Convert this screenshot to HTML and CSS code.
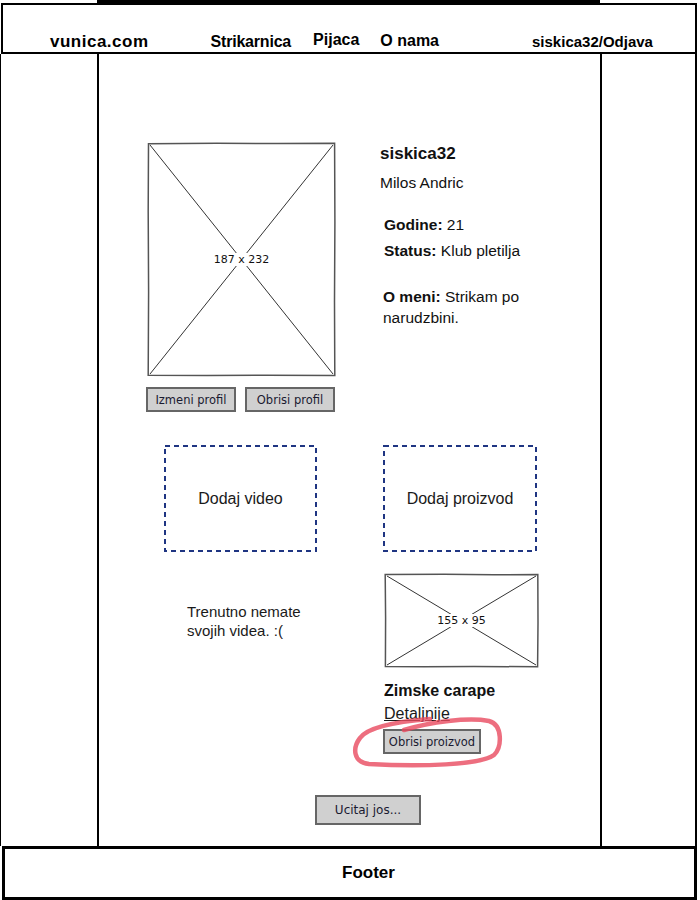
FILE: index.html
```html
<!DOCTYPE html>
<html lang="sr">
<head>
<meta charset="utf-8">
<title>vunica.com - profil</title>
<link rel="stylesheet" href="styles.css">
</head>
<body>
<div class="page">
  <div class="topline"></div>
  <header class="header">
    <span class="brand">vunica.com</span>
    <span class="nav-item nav-strik">Strikarnica</span>
    <span class="nav-item nav-pijaca">Pijaca</span>
    <span class="nav-item nav-onama">O nama</span>
    <span class="nav-item nav-user">siskica32/Odjava</span>
  </header>
  <div class="main">
    <div class="gutter gutter-left"></div>
    <div class="center">
      <section class="profile">
        <div class="photo-col">
          <div class="photo">
            <svg class="ph-svg" viewBox="0 0 189 235" preserveAspectRatio="none">
              <path d="M1.5 1.8 L70 1.2 L130 1.6 L187.6 1.2 L187.9 80 L187.5 160 L187.8 233.6 L120 233.2 L60 233.6 L1.2 233.3 L1.6 150 L1.2 70 Z" fill="none" stroke="#555" stroke-width="1.5"/>
              <path d="M3 3 L186 232 M186 3 L3 232" fill="none" stroke="#333" stroke-width="1"/>
            </svg>
            <span class="ph-label">187 x 232</span>
          </div>
          <div class="profile-btns">
            <div class="btn btn-profile">Izmeni profil</div>
            <div class="btn btn-profile">Obrisi profil</div>
          </div>
        </div>
        <div class="info">
          <div class="info-name">siskica32</div>
          <div class="info-fullname">Milos Andric</div>
          <div class="info-facts">
            <div class="fact"><b>Godine:</b> 21</div>
            <div class="fact"><b>Status:</b> Klub pletilja</div>
          </div>
          <div class="info-about"><b>O meni:</b> Strikam po<br>narudzbini.</div>
        </div>
      </section>

      <section class="media">
        <div class="dropzone">
          <svg class="dz-svg" viewBox="0 0 153 107" preserveAspectRatio="none">
            <rect x="1" y="1" width="151" height="105" fill="none" stroke="#1f3582" stroke-width="2" stroke-dasharray="5 4"/>
          </svg>
          <span class="dz-label">Dodaj video</span>
        </div>
        <div class="dropzone">
          <svg class="dz-svg" viewBox="0 0 154 107" preserveAspectRatio="none">
            <rect x="1" y="1" width="152" height="105" fill="none" stroke="#1f3582" stroke-width="2" stroke-dasharray="5 4"/>
          </svg>
          <span class="dz-label">Dodaj proizvod</span>
        </div>

        <div class="novideo">Trenutno nemate<br>svojih videa. :(</div>

        <div class="product">
          <div class="product-img">
            <svg class="ph-svg" viewBox="0 0 155 95" preserveAspectRatio="none">
              <path d="M1.2 1.6 L60 1.2 L110 1.8 L153.8 1.4 L154 50 L153.6 93.8 L90 93.4 L40 93.8 L1.4 93.5 L1.6 45 Z" fill="none" stroke="#555" stroke-width="1.5"/>
              <path d="M3 3 L152 92 M152 3 L3 92" fill="none" stroke="#333" stroke-width="1"/>
            </svg>
            <span class="ph-label">155 x 95</span>
          </div>
          <div class="product-name">Zimske carape</div>
          <div class="product-link">Detaljnije</div>
          <div class="product-action">
            <div class="btn btn-product">Obrisi proizvod</div>
            <svg class="scribble" viewBox="353 714 152 58">
              <path d="M404 732 C430 724 468 719 489 723 C503 727 502 749 494 757 C481 767 420 769 369 766 C352 764 353 749 360 740 C367 730 392 724 430 721" fill="none" stroke="#e84a5f" stroke-opacity="0.8" stroke-width="4.5" stroke-linecap="round" stroke-linejoin="round"/>
            </svg>
          </div>
        </div>
      </section>

      <div class="btn btn-more">Ucitaj jos...</div>
    </div>
    <div class="gutter gutter-right"></div>
  </div>
  <footer class="footer">Footer</footer>
</div>
</body>
</html>
```

FILE: styles.css
```css
* { box-sizing: border-box; }
html, body { margin: 0; padding: 0; background: #fff; }
body { font-family: "Liberation Sans", Arial, sans-serif; color: #111; }

.page { width: 700px; height: 900px; overflow: hidden; }

.topline { width: 503px; height: 3px; margin-left: 97px; background: #000; }

.header {
  margin-left: 1px;
  width: 696px;
  height: 51px;
  border: 2px solid #000;
  display: flex;
  align-items: flex-end;
  font-weight: bold;
  white-space: nowrap;
  color: #000;
}
.brand { font-size: 17px; line-height: 20px; letter-spacing: 0.5px; margin-left: 47px; }
.nav-item { font-size: 16px; line-height: 20px; }
.nav-strik { margin-left: 62px; letter-spacing: -0.2px; }
.nav-pijaca { margin-left: 22px; padding-bottom: 2px; }
.nav-onama { margin-left: 21px; padding-bottom: 1px; }
.nav-user { margin-left: 93px; font-size: 15px; }

.main { display: flex; height: 792px; }
.gutter-left { width: 97px; border-left: 1px solid #000; }
.center { width: 505px; border-left: 2px solid #000; border-right: 2px solid #000; }
.gutter-right { width: 95px; border-right: 2px solid #000; }

.profile { display: flex; padding: 88px 0 0 47px; }
.photo-col { width: 190px; }
.photo {
  position: relative;
  width: 189px;
  height: 235px;
  margin-left: 1px;
  display: flex;
  align-items: center;
  justify-content: center;
}
.ph-svg { position: absolute; left: 0; top: 0; width: 100%; height: 100%; }
.ph-label {
  position: relative;
  background: #fff;
  padding: 0 1px;
  font-family: "DejaVu Sans", sans-serif;
  font-size: 11px;
  line-height: 13px;
  color: #111;
}
.profile-btns { display: flex; gap: 9px; margin-top: 10px; }

.btn {
  display: flex;
  align-items: center;
  justify-content: center;
  height: 25px;
  background: #d0d0d0;
  border: 2px solid #666;
  font-family: "DejaVu Sans", sans-serif;
  font-size: 11.5px;
  color: #1a1a30;
  white-space: nowrap;
}
.btn-profile { width: 90px; }

.info { margin-left: 44px; padding-top: 2px; }
.info-name { font-size: 17px; font-weight: bold; line-height: 20px; }
.info-fullname { margin-top: 9px; font-size: 15.5px; line-height: 20px; }
.info-facts { margin: 22px 0 0 4px; font-size: 15.5px; }
.fact { line-height: 20px; }
.fact + .fact { margin-top: 6px; }
.info-about { margin: 25px 0 0 3px; font-size: 15.5px; line-height: 21px; }

.media {
  display: grid;
  grid-template-columns: 153px 155px;
  column-gap: 66px;
  row-gap: 21px;
  margin: 33px 0 0 65px;
}
.dropzone {
  position: relative;
  height: 107px;
  display: flex;
  align-items: center;
  justify-content: center;
}
.dropzone:nth-child(2) { width: 154px; }
.dz-svg { position: absolute; left: 0; top: 0; width: 100%; height: 100%; }
.dz-label { position: relative; font-size: 16px; color: #1a1a1a; }

.novideo { padding: 29px 0 0 23px; font-size: 15px; line-height: 19px; color: #1a1a1a; }

.product-img {
  position: relative;
  width: 155px;
  height: 95px;
  margin-left: 1px;
  display: flex;
  align-items: center;
  justify-content: center;
}
.product-name { margin: 13px 0 0 1px; font-size: 16px; font-weight: bold; line-height: 20px; }
.product-link { margin: 3px 0 0 1px; font-size: 16px; line-height: 20px; text-decoration: underline; color: #1a1a1a; }
.product-action { position: relative; margin-top: 5px; }
.btn-product { width: 98px; }
.scribble {
  position: absolute;
  left: -30px;
  top: -17px;
  width: 152px;
  height: 58px;
  overflow: visible;
  pointer-events: none;
}

.btn-more { width: 106px; height: 30px; margin: 41px 0 0 216px; font-size: 12px; }

.footer {
  margin-left: 2px;
  width: 695px;
  height: 54px;
  border: 3px solid #000;
  display: flex;
  align-items: center;
  padding-left: 337px;
  font-size: 17px;
  font-weight: bold;
  color: #000;
}
```
